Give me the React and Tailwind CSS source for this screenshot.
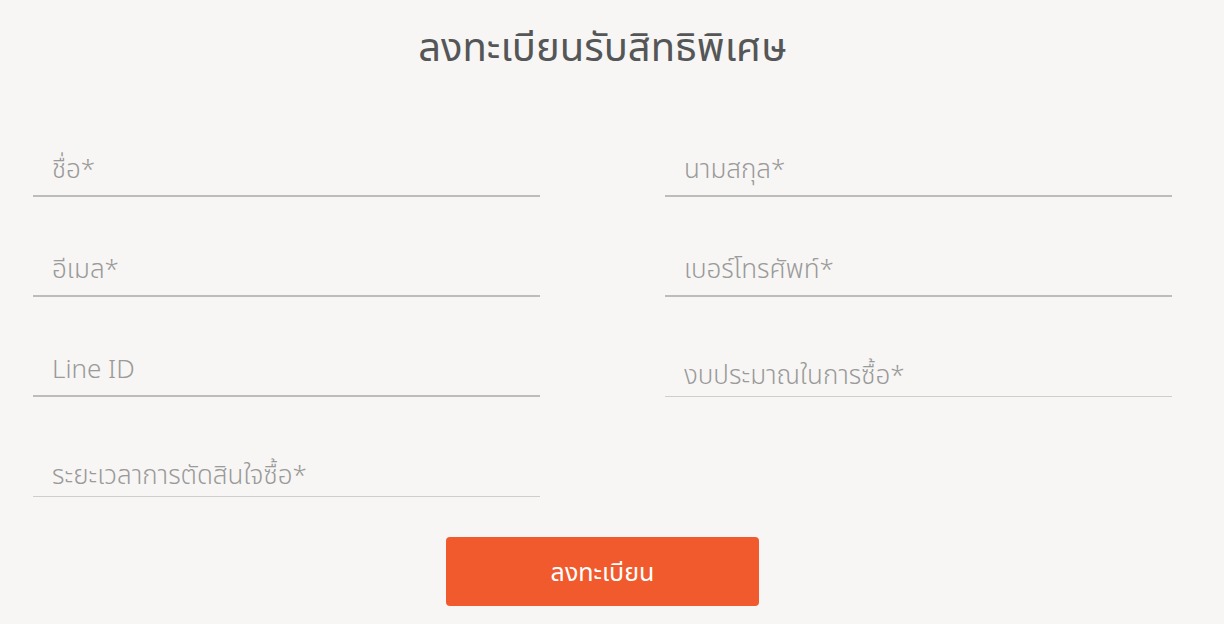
import React from "react";

const fields = [
  { label: "ชื่อ*", strong: true },
  { label: "นามสกุล*", strong: true },
  { label: "อีเมล*", strong: true },
  { label: "เบอร์โทรศัพท์*", strong: true },
  { label: "Line ID", strong: true },
  { label: "งบประมาณในการซื้อ*", strong: false, low: true },
  { label: "ระยะเวลาการตัดสินใจซื้อ*", strong: false, low: true },
];

const Field = ({ label, strong, low }) => (
  <div
    className={
      "h-[100px] flex items-end " +
      (strong ? "border-b-2 border-[#bdbcbb]" : "border-b border-[#cfcecd]")
    }
  >
    <input
      placeholder={label}
      className={
        "w-full bg-transparent outline-none px-[19px] text-[26px] leading-[40px] font-light text-[#555] placeholder:text-[#9a9a9a] " +
        (low ? "pb-[2px]" : "pb-[7px]")
      }
    />
  </div>
);

export default function App() {
  return (
    <div
      className="min-h-[624px] bg-[#f7f6f4] overflow-hidden"
      style={{ fontFamily: '"Noto Sans", "Noto Sans Thai", sans-serif' }}
    >
      <div className="ml-[33px] w-[1139px] pt-[16px]">
        <h1 className="text-center text-[40px] leading-[60px] text-[#555657] font-normal">
          ลงทะเบียนรับสิทธิพิเศษ
        </h1>

        <div className="grid grid-cols-2 gap-x-[125px] mt-[21px]">
          {fields.map((f) => (
            <Field key={f.label} {...f} />
          ))}
        </div>

        <div className="flex justify-center mt-[40px]">
          <button className="w-[313px] h-[69px] rounded-[4px] bg-[#f15a2d] text-white text-[25px]">
            ลงทะเบียน
          </button>
        </div>
      </div>
    </div>
  );
}
